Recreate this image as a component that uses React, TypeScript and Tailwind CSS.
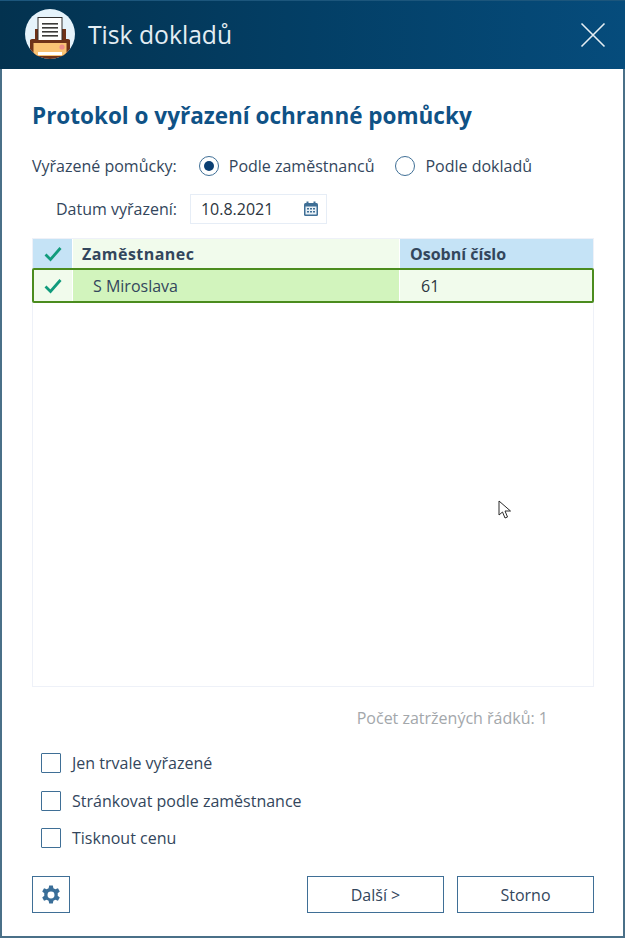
const PrinterLogo = () => (
  <svg width="50" height="50" viewBox="0 0 50 50" className="shrink-0 -mt-[2px]">
    <defs>
      <clipPath id="logoClip">
        <circle cx="25" cy="25" r="25" />
      </clipPath>
    </defs>
    <circle cx="25" cy="25" r="25" fill="#e6f3fb" />
    <g clipPath="url(#logoClip)">
      <rect x="10" y="20" width="31" height="28" fill="#6f3218" />
      <rect x="5" y="30" width="40" height="18" rx="2" fill="#6f3218" />
      <rect x="13" y="8.5" width="24" height="30" fill="#ffffff" stroke="#33302e" strokeWidth="1" />
      <rect x="17" y="14" width="16" height="1.6" fill="#3c3a38" />
      <rect x="17" y="18" width="16" height="1.6" fill="#3c3a38" />
      <rect x="17" y="22" width="16" height="1.6" fill="#3c3a38" />
      <rect x="17" y="26" width="16" height="1.6" fill="#3c3a38" />
      <rect x="5" y="31" width="40" height="3" fill="#6f3218" />
      <rect x="8.5" y="34" width="33" height="13" fill="#f9c374" />
      <circle cx="37" cy="38" r="2.6" fill="#ee8f8a" />
      <rect x="13" y="43" width="24" height="3" fill="#ffffff" />
      <rect x="5" y="47" width="40" height="4" fill="#6f3218" />
    </g>
  </svg>
);

const Check = ({ className }: { className?: string }) => (
  <svg width="18" height="16" viewBox="0 0 18 16" className={className}>
    <path d="M1.5 8.5 L6.5 13.5 L16.5 2" fill="none" stroke="#119b7c" strokeWidth="2.8" />
  </svg>
);

const CheckBox = ({ label }: { label: string }) => (
  <div className="flex items-center gap-[11px] h-[20px]">
    <div className="w-[20px] h-[20px] border-[1.5px] border-[#3f6f96] rounded-[1px]" />
    <span className="text-[16px] text-[#33465c]">{label}</span>
  </div>
);

const Radio = ({ label, checked }: { label: string; checked?: boolean }) => (
  <div className="flex items-center gap-[10px]">
    <div className="w-[20px] h-[20px] rounded-full border-[1.5px] border-[#3f6f96] flex items-center justify-center">
      {checked && <div className="w-[10px] h-[10px] rounded-full bg-[#0b3f73]" />}
    </div>
    <span className="text-[16px] text-[#33465c]">{label}</span>
  </div>
);

export default function App() {
  return (
    <div className="relative w-[625px] h-[938px] flex flex-col bg-white font-['Open_Sans',sans-serif] border-l-2 border-r-2 border-b-2 border-[#4a7088]">
      {/* Title bar */}
      <div className="-mx-[2px] h-[69px] shrink-0 flex items-center pl-[25px] pr-[19px] bg-gradient-to-r from-[#03324f] via-[#033f66] to-[#064c7c] border-t border-[#1c567c]">
        <PrinterLogo />
        <span className="ml-[13px] text-[24.7px] text-[#e3edf3]">Tisk dokladů</span>
        <svg width="26" height="26" viewBox="0 0 26 26" className="ml-auto">
          <path d="M1.5 1.5 L24.5 24.5 M24.5 1.5 L1.5 24.5" stroke="#e6eef3" strokeWidth="1.6" fill="none" />
        </svg>
      </div>

      <div className="flex-1 flex flex-col pl-[30px] pr-[29px]">
        <h1 className="mt-[32px] text-[22.5px] leading-[30px] font-bold text-[#0f5286]">
          Protokol o vyřazení ochranné pomůcky
        </h1>

        {/* Filter */}
        <div className="mt-[23px] flex items-center h-[24px]">
          <span className="text-[16px] text-[#33465c]">Vyřazené pomůcky:</span>
          <div className="ml-[22px]">
            <Radio label="Podle zaměstnanců" checked />
          </div>
          <div className="ml-[21px]">
            <Radio label="Podle dokladů" />
          </div>
        </div>

        {/* Date */}
        <div className="mt-[16px] flex items-center h-[30px]">
          <span className="ml-[24px] text-[16px] text-[#33465c]">Datum vyřazení:</span>
          <div className="ml-[13px] w-[137px] h-[30px] border border-[#e6edf6] flex items-center justify-between pl-[10px] pr-[7px]">
            <span className="text-[16px] text-[#2c3540]">10.8.2021</span>
            <svg width="16" height="16" viewBox="0 0 16 16">
              <rect x="1" y="2" width="14" height="13" rx="1.5" fill="#3f6f96" />
              <rect x="3.5" y="0.5" width="2" height="3" fill="#3f6f96" />
              <rect x="10.5" y="0.5" width="2" height="3" fill="#3f6f96" />
              <rect x="2.5" y="5.5" width="11" height="8" fill="#e8f0f6" />
              <path d="M4 7h2v1.5H4zM7 7h2v1.5H7zM10 7h2v1.5h-2zM4 10h2v1.5H4zM7 10h2v1.5H7zM10 10h2v1.5h-2z" fill="#3f6f96" />
            </svg>
          </div>
        </div>

        {/* Table */}
        <div className="mt-[14px] h-[449px] border border-[#eef1f8] flex flex-col">
          <div className="h-[29px] shrink-0 flex text-[16px] font-bold text-[#33465c]">
            <div className="w-[40px] bg-[#c5e3f6] flex items-center justify-center border-r border-white">
              <Check />
            </div>
            <div className="w-[327px] bg-[#f1fbec] flex items-center pl-[9px] border-r border-white tracking-[0.45px]">
              Zaměstnanec
            </div>
            <div className="flex-1 bg-[#c5e3f6] flex items-center pl-[10px]">Osobní číslo</div>
          </div>
          <div className="h-[35px] shrink-0 flex border-[2px] border-[#4b8c1e] rounded-[2px] text-[16px] text-[#33465c] -mx-px">
            <div className="w-[39px] bg-[#f1fbec] flex items-center justify-center border-r border-white">
              <Check />
            </div>
            <div className="w-[327px] bg-[#d2f4bd] flex items-center pl-[20px] border-r border-white">
              S Miroslava
            </div>
            <div className="flex-1 bg-[#f1fbec] flex items-center pl-[21px] text-[#2c3540]">61</div>
          </div>
        </div>

        <div className="mt-[21px] text-right pr-[46px] text-[16px] leading-[20px] text-[#a3a7ab]">
          Počet zatržených řádků: 1
        </div>

        {/* Options */}
        <div className="mt-[25px] ml-[9px] flex flex-col gap-[17.5px]">
          <CheckBox label="Jen trvale vyřazené" />
          <CheckBox label="Stránkovat podle zaměstnance" />
          <CheckBox label="Tisknout cenu" />
        </div>

        {/* Footer */}
        <div className="mt-[28px] flex items-center">
          <button className="w-[38px] h-[37px] border-[1.5px] border-[#3f6f96] flex items-center justify-center">
            <svg width="22" height="22" viewBox="0 0 24 24" fill="#3a6e98">
              <path
                fillRule="evenodd"
                d="M10 1.5h4l.6 3a8 8 0 0 1 2.1 1.2l2.9-1 2 3.5-2.3 2a8 8 0 0 1 0 2.5l2.3 2-2 3.5-2.9-1a8 8 0 0 1-2.1 1.2l-.6 3h-4l-.6-3a8 8 0 0 1-2.1-1.2l-2.9 1-2-3.5 2.3-2a8 8 0 0 1 0-2.5l-2.3-2 2-3.5 2.9 1a8 8 0 0 1 2.1-1.2zM12 8.2a3.8 3.8 0 1 0 0 7.6 3.8 3.8 0 0 0 0-7.6z"
              />
            </svg>
          </button>
          <button className="ml-auto w-[137px] h-[37px] border-[1.5px] border-[#3f6f96] text-[16px] text-[#33465c]">
            Další &gt;
          </button>
          <button className="ml-[13px] w-[137px] h-[37px] border-[1.5px] border-[#3f6f96] text-[16px] text-[#33465c]">
            Storno
          </button>
        </div>
      </div>

      {/* Mouse pointer over the grid */}
      <svg width="14" height="20" viewBox="0 0 14 20" className="absolute left-[496px] top-[500px]">
        <path d="M1 1 L1 15 L4.5 12 L7 18 L9.5 17 L7 11 L12.5 11 Z" fill="#ffffff" stroke="#2a2a2a" strokeWidth="1" />
      </svg>
    </div>
  );
}
